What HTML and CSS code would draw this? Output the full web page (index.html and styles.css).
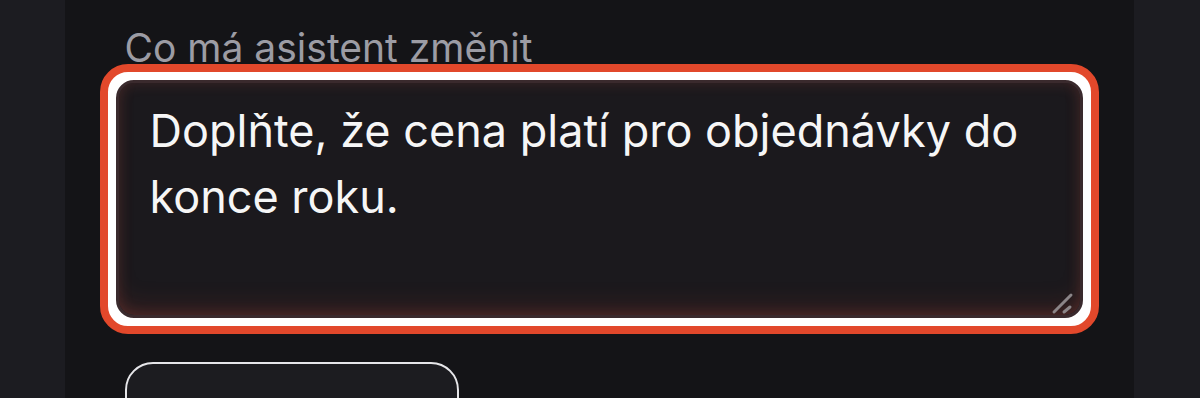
FILE: index.html
```html
<!DOCTYPE html>
<html lang="cs">
<head>
  <meta charset="UTF-8" />
  <title>Úprava odpovědi</title>
  <link rel="stylesheet" href="styles.css">
</head>
<body>
<div class="page">
  <div class="panel">
    <label class="field-label" for="change">Co má asistent změnit</label>

    <!-- pole s fokusem -->
    <div class="focus-ring">
      <div class="field">
        <textarea id="change">Doplňte, že cena platí pro objednávky do konce roku.</textarea>
        <svg class="resize-grip" viewBox="0 0 32 26" aria-hidden="true">
          <line x1="3" y1="20" x2="20" y2="3" />
          <line x1="13" y1="20" x2="19" y2="15" />
        </svg>
      </div>
    </div>

    <button class="ghost-btn" type="button"></button>
  </div>
</div>
</body>
</html>
```

FILE: styles.css
```css
* { box-sizing: border-box; margin: 0; padding: 0; }
body {
  font-family: Inter, 'Noto Sans', sans-serif;
  background: #1c1c21;
  height: 398px;
  overflow: hidden;
}
.page {
  display: flex;
  justify-content: center;
  height: 100%;
}
.panel {
  width: 1069px;
  height: 100%;
  margin-left: -2px;
  background: #141417;
  padding: 25px 60px 0;
  display: flex;
  flex-direction: column;
  overflow: hidden;
}
.field-label {
  display: block;
  font-size: 39px;
  line-height: 46px;
  color: #9c9ca4;
}

.focus-ring {
  position: relative;
  flex-shrink: 0;
  margin: -7px -25px 0;
  padding: 8px;
  border: 8px solid #e2482b;
  background: #fff;
  border-radius: 28px;
}
.field {
  position: relative;
}
.field textarea {
  display: block;
  width: 100%;
  height: 238px;
  padding: 15px 31px;
  font-family: Inter, 'Noto Sans', sans-serif;
  font-size: 45px;
  line-height: 66px;
  color: #f6f6f6;
  background: #1b191d;
  border: 3px solid #3a2a2d;
  border-radius: 18px;
  resize: none;
  outline: none;
  box-shadow: inset 0 -18px 30px -16px rgba(190, 70, 55, 0.28),
              inset 0 0 14px rgba(200, 90, 75, 0.2);
}
.resize-grip {
  position: absolute;
  right: 0;
  bottom: 0;
  width: 32px;
  height: 26px;
  stroke: #8b8588;
  stroke-width: 3;
  stroke-linecap: round;
}

.ghost-btn {
  flex-shrink: 0;
  margin-top: 28px;
  width: 334px;
  height: 80px;
  background: #1c1c20;
  border: 2px solid #e6e6e9;
  border-radius: 28px;
  cursor: pointer;
}
```
